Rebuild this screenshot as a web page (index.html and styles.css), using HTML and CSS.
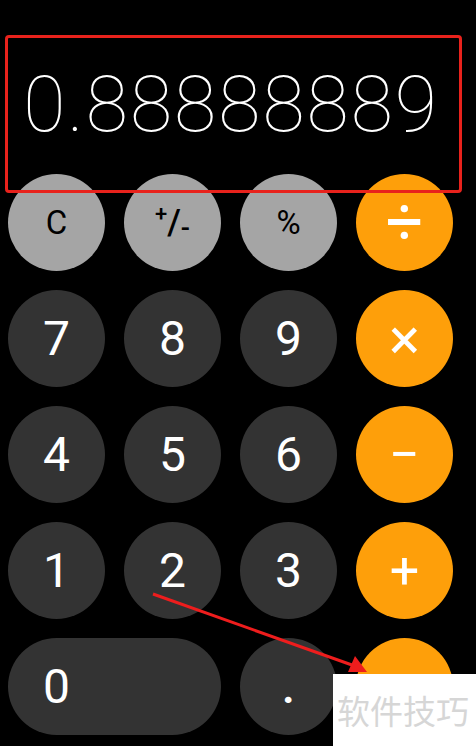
FILE: index.html
```html
<!DOCTYPE html>
<html lang="zh-CN">
<head>
    <meta charset="UTF-8">
    <title>计算器</title>
    <link rel="stylesheet" href="styles.css">
</head>
<body>
    <div class="calc">
        <!-- 显示结果 -->
        <div class="display">0.88888889</div>

        <!-- 按键 -->
        <div class="keys">
            <div class="key fn small">C</div>
            <div class="key fn pm"><span class="sup">+</span><span>/</span><span class="sub">-</span></div>
            <div class="key fn small">%</div>
            <div class="key op div">÷</div>

            <div class="key num">7</div>
            <div class="key num">8</div>
            <div class="key num">9</div>
            <div class="key op mul">×</div>

            <div class="key num">4</div>
            <div class="key num">5</div>
            <div class="key num">6</div>
            <div class="key op minus">−</div>

            <div class="key num">1</div>
            <div class="key num">2</div>
            <div class="key num">3</div>
            <div class="key op plus">+</div>

            <div class="key num zero">0</div>
            <div class="key num dot">.</div>
            <!-- 等号被水印挡住 -->
            <div class="key op"></div>
        </div>
    </div>

    <!-- 标注框 -->
    <div class="mark"></div>

    <!-- 箭头 -->
    <svg class="arrow" width="476" height="746" viewBox="0 0 476 746">
        <line x1="153" y1="594" x2="352" y2="665" stroke="#ee1d1d" stroke-width="3" />
        <polygon points="367,672 348,672 355,656" fill="#ee1d1d" />
    </svg>

    <!-- 水印 -->
    <div class="watermark">软件技巧</div>
</body>
</html>
```

FILE: styles.css
```css
* {
    margin: 0;
    padding: 0;
    box-sizing: border-box;
}

body {
    width: 476px;
    height: 746px;
    background: #000;
    overflow: hidden;
    font-family: Roboto, "Liberation Sans", sans-serif;
    position: relative;
}

.display {
    height: 174px;
    padding: 67px 37px 0 0;
    text-align: right;
    color: #fff;
    font-size: 77px;
    font-weight: 100;
    line-height: 77px;
    letter-spacing: 2px;
}

.keys {
    display: grid;
    grid-template-columns: repeat(4, 97px);
    grid-auto-rows: 97px;
    gap: 19px;
    padding-left: 8px;
}

.key {
    display: flex;
    align-items: center;
    justify-content: center;
    border-radius: 50%;
    font-size: 48px;
    color: #fff;
}

.fn {
    background: #a5a5a5;
    color: #000;
}

.fn.small {
    font-size: 33px;
}

.pm {
    font-size: 35px;
    font-weight: 500;
}

.pm .sup {
    position: relative;
    top: -9px;
    font-size: 22px;
}

.pm .sub {
    position: relative;
    top: 5px;
    font-size: 27px;
}

.num {
    background: #333;
}

.dot {
    font-weight: 500;
}

.op {
    background: #fe9f0a;
}

.op.div {
    font-size: 66px;
}

.op.mul {
    font-size: 58px;
}

.op.minus {
    font-size: 54px;
}

.op.plus {
    font-size: 52px;
}

.zero {
    grid-column: span 2;
    border-radius: 49px;
    justify-content: flex-start;
    padding-left: 35px;
}

.mark {
    position: absolute;
    left: 5px;
    top: 35px;
    width: 457px;
    height: 158px;
    border: 3px solid #e8221c;
    border-radius: 4px;
}

.arrow {
    position: absolute;
    left: 0;
    top: 0;
}

.watermark {
    position: absolute;
    left: 333px;
    top: 674px;
    width: 143px;
    height: 72px;
    background: #fff;
    color: #d6d6d6;
    font-family: "Noto Sans CJK SC", sans-serif;
    font-size: 33px;
    line-height: 72px;
    padding-left: 4px;
    white-space: nowrap;
}
```
